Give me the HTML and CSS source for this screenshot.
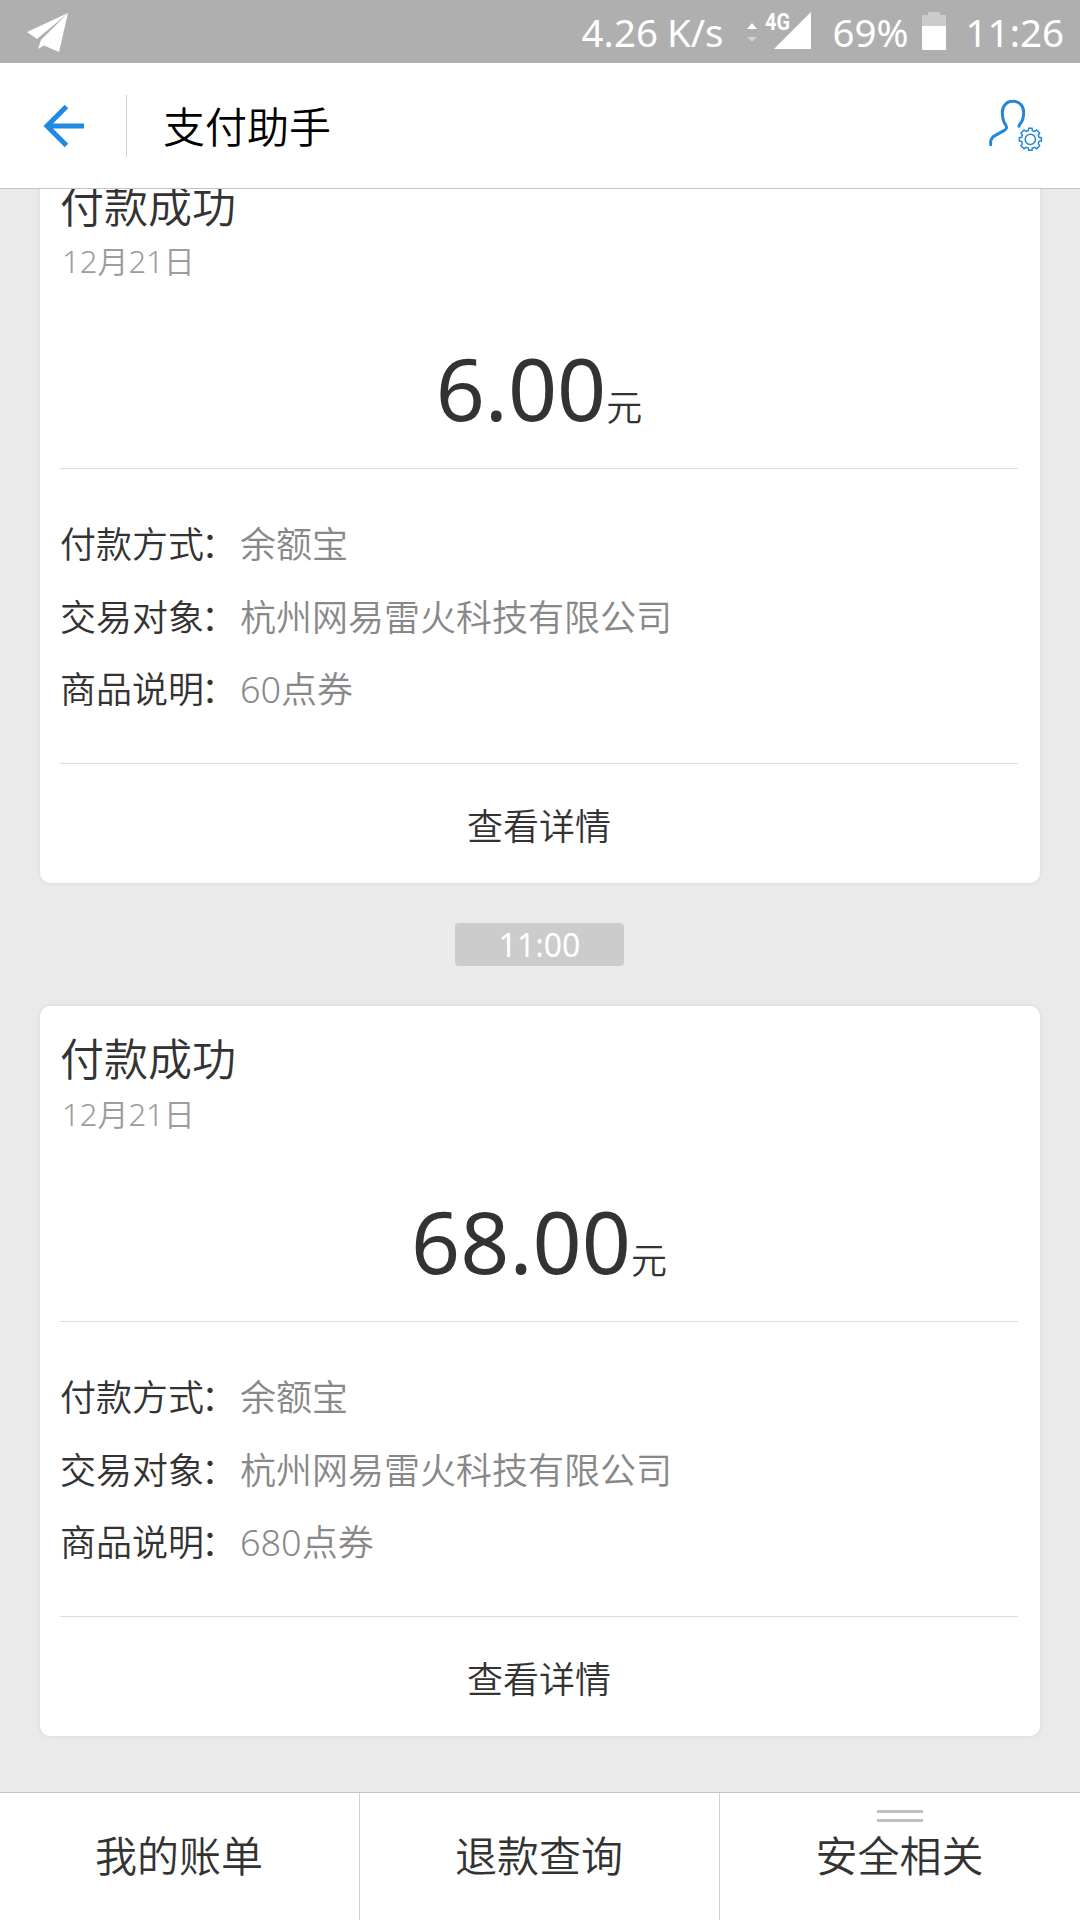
FILE: index.html
```html
<!DOCTYPE html>
<html lang="zh-CN">
<head>
<meta charset="utf-8">
<title>支付助手</title>
<link rel="stylesheet" href="styles.css">
</head>
<body>
<div class="status">
  <svg class="plane" viewBox="0 0 44 42" width="44" height="42"><path d="M1 20 42 1 11 27ZM42 1 33 40 18 33.5 12 37 15 28Z" fill="#fff"/></svg>
  <span class="speed">4.26 K/s</span>
  <svg class="signal" viewBox="0 -12 66 52" width="66" height="52">
    <path d="M2 17 7 11 12 17Z" fill="#fff"/><path d="M2 25H12L7 30Z" fill="#d0d0d0"/>
    <path d="M29 37 66 0V37Z" fill="#fff"/>
    <text class="net" x="20" y="18" textLength="25" lengthAdjust="spacingAndGlyphs">4G</text>
  </svg>
  <span class="percent">69%</span>
  <svg class="battery" viewBox="0 0 24 38" width="24" height="38"><path d="M0 3H6V0H18V3H24V14H0Z" fill="#ccc"/><path d="M0 14H24V38H0Z" fill="#fff"/></svg>
  <span class="clock">11:26</span>
</div>
<header class="header">
  <svg class="back" viewBox="0 0 44 44" width="44" height="44"><path d="M41 22H5M23.500 2.500 4 22 23.500 41.500" fill="none" stroke="#1e8ae2" stroke-width="5"/></svg>
  <i class="bar"></i>
  <h1 class="title">支付助手</h1>
  <svg class="user" viewBox="85 55 171 165" width="57" height="55">
    <g fill="none" stroke="#2387d9" stroke-linecap="round">
      <path stroke-width="9" d="M93 195V186Q94 174 107 167L134 152Q145 146 138 136C130 126 128 119 128 98C128 77 142 65 160 65C178 65 192 77 192 98C192 117 188 126 181 133Q178 136 178 140"/>
      <g transform="translate(212 179)" stroke-width="4.500">
        <path d="M-5-33H5L6-26 13-24 19-28 28-19 24-13 26-6 33-5V5L26 6 24 13 28 19 19 28 13 24 6 26 5 33H-5L-6 26-13 24-19 28-28 19-24 13-26 6-33 5V-5L-26-6-24-13-28-19-19-28-13-24-6-26Z"/>
        <circle r="15.500"/>
      </g>
    </g>
  </svg>
</header>
<main class="feed">
  <section class="card">
    <h2 class="name">付款成功</h2>
    <p class="date">12月21日</p>
    <p class="amount">6.00<span class="unit">元</span></p>
    <dl class="details">
      <dt>付款方式<span class="colon">：</span></dt><dd>余额宝</dd>
      <dt>交易对象<span class="colon">：</span></dt><dd>杭州网易雷火科技有限公司</dd>
      <dt>商品说明<span class="colon">：</span></dt><dd>60点券</dd>
    </dl>
    <a class="more">查看详情</a>
  </section>
  <time class="stamp">11:00</time>
  <section class="card">
    <h2 class="name">付款成功</h2>
    <p class="date">12月21日</p>
    <p class="amount">68.00<span class="unit">元</span></p>
    <dl class="details">
      <dt>付款方式<span class="colon">：</span></dt><dd>余额宝</dd>
      <dt>交易对象<span class="colon">：</span></dt><dd>杭州网易雷火科技有限公司</dd>
      <dt>商品说明<span class="colon">：</span></dt><dd>680点券</dd>
    </dl>
    <a class="more">查看详情</a>
  </section>
</main>
<nav class="tabs">
  <a class="tab">我的账单</a>
  <a class="tab">退款查询</a>
  <a class="tab"><i class="grip"></i>安全相关</a>
</nav>
</body>
</html>
```
FILE: styles.css
```css
* { box-sizing: border-box; margin: 0; padding: 0; }
body {
  width: 1080px; height: 1920px; overflow: hidden;
  display: flex; flex-direction: column;
  background: #eaeaea; color: #333;
  font-family: "Noto Sans", "Noto Sans CJK SC", sans-serif;
  font-weight: 350;
}
.status {
  flex: none; height: 63px; display: flex; align-items: flex-start;
  padding: 12px 16px 0 26px; background: #afafaf; color: #fff;
  font-size: 38.500px; line-height: 41px; font-weight: 400; white-space: nowrap;
}
.speed { margin-left: auto; word-spacing: -1px; }
.signal { margin: -12px 1px 0 21px; }
.net { font: bold 24px Roboto, sans-serif; fill: #fff; }
.percent { margin-left: 21px; }
.battery { margin-left: 13px; }
.clock { margin-left: 20px; }
.header {
  flex: none; height: 126px; display: flex; align-items: center;
  padding: 0 35px 0 43px; background: #fff; border-bottom: 1px solid #c4c4c4;
}
.bar { width: 1px; height: 62px; margin: 0 36px 0 39px; background: #cfcfcf; }
.title { margin-bottom: 2px; font: 350 42px/60px "Noto Sans CJK SC", sans-serif; color: #000; }
.user { margin-left: auto; }
.feed {
  flex: 1; min-height: 0; overflow: hidden;
  display: flex; flex-direction: column; align-items: center;
}
.card {
  flex: none; width: 1000px; height: 730px; padding: 0 20px;
  display: flex; flex-direction: column;
  background: #fff; border-radius: 10px; box-shadow: 0 0 4px rgba(0,0,0,.09);
}
.card > * { flex: none; }
.card:first-child { margin-top: -36px; }
.name { margin-top: 20px; font: 350 44px/62px "Noto Sans CJK SC", sans-serif; }
.date { margin: 3px 0 1px 2px; color: #9c9c9c; font-size: 31px; line-height: 46px; }
.amount {
  height: 184px; padding-top: 43px; border-bottom: 1px solid #ddd; margin-right: 2px;
  text-align: center; font-size: 86px; line-height: 120px; font-weight: 400;
}
.unit { font: 350 36px/36px "Noto Sans CJK SC", sans-serif; }
.details {
  height: 295px; padding-top: 37px; margin-right: 2px; border-bottom: 1px solid #ddd;
  display: grid; grid-template-columns: 180px 1fr; grid-auto-rows: 72.500px;
  font-size: 36px; line-height: 72px;
}
.details dt { font-family: "Noto Sans CJK SC", sans-serif; white-space: nowrap; }
.colon { display: inline-block; transform: translate(-3px, 0); }
.details dd { padding-top: 3px; color: #888; }
.more { padding-top: 2px; margin-right: 2px; font: 350 36px/117px "Noto Sans CJK SC", sans-serif; text-align: center; }
.stamp {
  flex: none; width: 169px; height: 43px; margin: 40px 1px 40px 0; border-radius: 4px;
  background: #ccc; color: #fff; font-size: 32px; line-height: 44px; font-weight: 400; text-align: center;
}
.tabs { flex: none; height: 128px; display: flex; background: #fff; border-top: 1px solid #c4c4c4; }
.tab {
  flex: none; width: 360px; padding-right: 1px; position: relative; text-align: center;
  font: 350 42px/122px "Noto Sans CJK SC", sans-serif;
}
.tab:not(:last-child) { border-right: 1px solid #d0d0d0; }
.grip {
  position: absolute; left: 157px; top: 17px; width: 46px; height: 12px;
  border: solid #c0c0c0; border-width: 3px 0;
}
```
